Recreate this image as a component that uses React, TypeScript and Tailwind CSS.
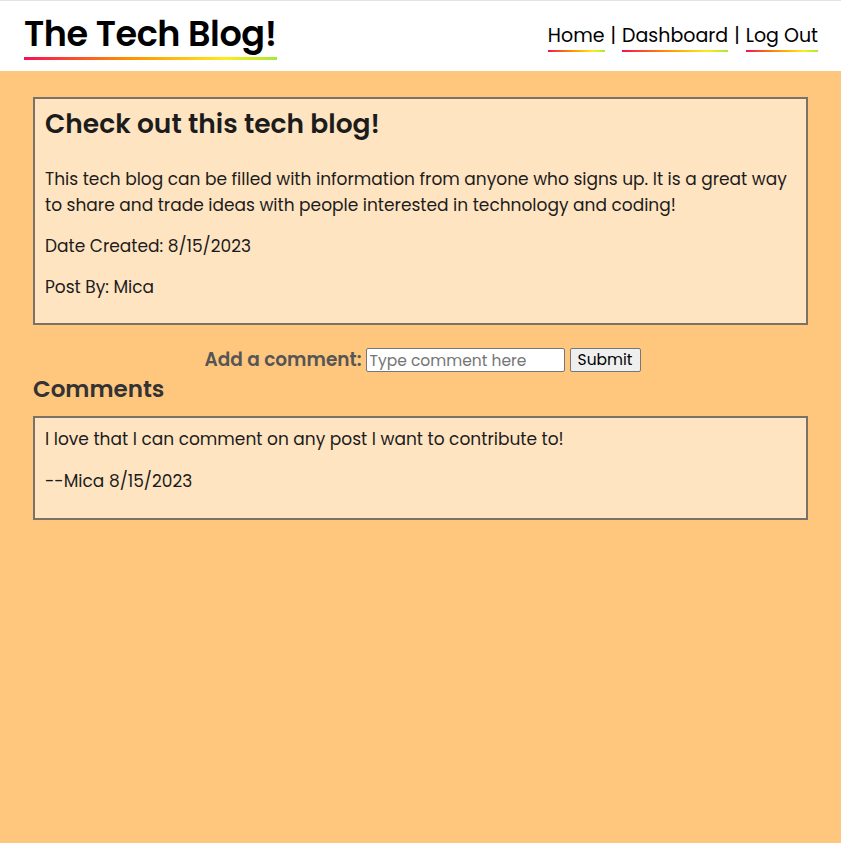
import React from "react";

const grad = "bg-[linear-gradient(90deg,#f5105a,#ff8c00_40%,#ffeb1a_80%,#a6e83a)]";

function NavLink({ children }: { children: React.ReactNode }) {
  return (
    <span className="relative inline-block">
      {children}
      <span className={`absolute left-0 right-0 bottom-[-3px] h-[2px] ${grad}`} />
    </span>
  );
}

export default function App() {
  return (
    <div className="min-h-[843px] bg-[#ffc67d] font-['Poppins','Inter',sans-serif] text-[#1c1c1c]">
      <header className="bg-white border-t border-[#e3e3e3] h-[71px] flex items-start justify-between pl-[24px] pr-[23px]">
        <div className="pt-[10px]">
          <div className="relative inline-block text-[35px] leading-[45px] font-semibold text-black tracking-[-0.4px]">
            The Tech Blog!
            <span className={`absolute left-0 right-0 bottom-[-4px] h-[3px] ${grad}`} />
          </div>
        </div>
        <nav className="pt-[22px] text-[19px] leading-[26px] text-black flex gap-[6px]">
          <NavLink>Home</NavLink>
          <span>|</span>
          <NavLink>Dashboard</NavLink>
          <span>|</span>
          <NavLink>Log Out</NavLink>
        </nav>
      </header>
      <main className="px-[33px] pt-[26px]">
        <section className="bg-[#ffe4c2] border-2 border-[#7a7169] px-[10px] pt-[6px] pb-[23px]">
          <h2 className="text-[26.5px] leading-[38px] font-semibold text-[#1c1c1c]">Check out this tech blog!</h2>
          <p className="mt-[23px] text-[17px] leading-[26px]">
            This tech blog can be filled with information from anyone who signs up. It is a great way to share and trade ideas with people interested in technology and coding!
          </p>
          <p className="mt-[15px] text-[17px] leading-[26px]">Date Created: 8/15/2023</p>
          <p className="mt-[15px] text-[17px] leading-[26px]">Post By: Mica</p>
        </section>
        <form className="mt-[23px] ml-[4px] flex items-center justify-center" onSubmit={(e) => e.preventDefault()}>
          <label className="text-[18.5px] leading-[24px] font-semibold text-[#555555] mr-[4px]">Add a comment:</label>
          <input
            className="w-[199px] h-[24px] bg-white border border-[#767676] rounded-[2px] px-[3px] text-[15.5px] text-black placeholder:text-[#757575] outline-none mr-[5px]"
            placeholder="Type comment here"
          />
          <button className="h-[24px] px-[7px] bg-[#efefef] border border-[#767676] rounded-[2px] text-[15.5px] leading-[20px] text-black">
            Submit
          </button>
        </form>
        <h3 className="mt-[2px] text-[23px] leading-[30px] font-semibold text-[#333333]">Comments</h3>
        <section className="mt-[12px] bg-[#ffe4c2] border-2 border-[#7a7169] px-[10px] pt-[8px] pb-[24px]">
          <p className="text-[17px] leading-[26px]">I love that I can comment on any post I want to contribute to!</p>
          <p className="mt-[16px] text-[17px] leading-[26px]">--Mica 8/15/2023</p>
        </section>
      </main>
    </div>
  );
}
